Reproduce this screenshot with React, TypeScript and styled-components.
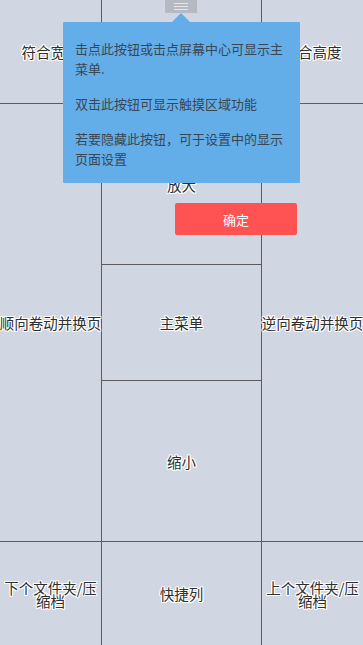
import React from 'react';
import styled, { createGlobalStyle } from 'styled-components';

const GlobalStyle = createGlobalStyle`
  html, body, #root {
    margin: 0;
    padding: 0;
    height: 100%;
  }
  body {
    font-family: "Noto Sans CJK SC", "Noto Sans", sans-serif;
    overflow: hidden;
  }
`

const Screen = styled.div`
  position: relative;
  width: 100%;
  height: 100%;
  display: grid;
  grid-template-columns: 101px 159px 1fr;
  grid-template-rows: 103px 160px 115px 160px 1fr;
  gap: 1px;
  background: #5c5c5e;
  overflow: hidden;
`

const Zone = styled.div<{ $col: number; $row: string }>`
  grid-column: ${p => p.$col};
  grid-row: ${p => p.$row};
  background: #d0d6e2;
  display: flex;
  align-items: center;
  justify-content: center;
  text-align: center;
  overflow: visible;
  min-width: 0;
`

const Label = styled.span<{ $nowrap?: boolean }>`
  font-size: 14.5px;
  line-height: 13px;
  color: #2e2e2e;
  white-space: ${p => (p.$nowrap ? 'nowrap' : 'normal')};
  line-break: anywhere;
  word-break: break-all;
  text-shadow: 1px 0 #fff, -1px 0 #fff, 0 1px #fff, 0 -1px #fff,
    1px 1px #fff, -1px -1px #fff, 1px -1px #fff, -1px 1px #fff;
  padding: 0;
`

const Handle = styled.div`
  position: absolute;
  top: 0;
  left: 165px;
  width: 32px;
  height: 13px;
  background: #b5b9c1;
  display: flex;
  flex-direction: column;
  align-items: center;
  justify-content: center;
  gap: 2px;
`

const HandleLine = styled.span`
  display: block;
  width: 14px;
  height: 1px;
  background: #e4e6ea;
`

const Tip = styled.div`
  position: absolute;
  top: 22px;
  left: 63px;
  width: 237px;
  height: 161px;
  box-sizing: border-box;
  padding: 17px 12px 0 12px;
  background: #63aee8;
  border-radius: 1px;
  &::before {
    content: '';
    position: absolute;
    top: -9px;
    left: 109px;
    border-left: 9px solid transparent;
    border-right: 9px solid transparent;
    border-bottom: 9px solid #63aee8;
  }
`

const TipText = styled.p`
  margin: 0 0 15px 0;
  font-size: 13px;
  line-height: 20px;
  color: #3b4654;
`

const Confirm = styled.button`
  position: absolute;
  top: 203px;
  left: 175px;
  width: 122px;
  height: 32px;
  border: none;
  border-radius: 2px;
  background: #ff5353;
  color: #fff;
  font-family: "Noto Sans CJK SC", sans-serif;
  font-size: 13px;
  padding: 0;
`

export default function App() {
  return (
    <>
      <GlobalStyle />
      <Screen>
        <Zone $col={1} $row="1"><Label $nowrap>符合宽度</Label></Zone>
        <Zone $col={2} $row="1" />
        <Zone $col={3} $row="1"><Label $nowrap>符合高度</Label></Zone>
        <Zone $col={1} $row="2 / 5"><Label $nowrap>顺向卷动并换页</Label></Zone>
        <Zone $col={2} $row="2"><Label>放大</Label></Zone>
        <Zone $col={3} $row="2 / 5"><Label $nowrap>逆向卷动并换页</Label></Zone>
        <Zone $col={2} $row="3"><Label>主菜单</Label></Zone>
        <Zone $col={2} $row="4"><Label>缩小</Label></Zone>
        <Zone $col={1} $row="5"><Label>下个文件夹/压缩档</Label></Zone>
        <Zone $col={2} $row="5"><Label>快捷列</Label></Zone>
        <Zone $col={3} $row="5"><Label>上个文件夹/压缩档</Label></Zone>

        <Handle>
          <HandleLine />
          <HandleLine />
          <HandleLine />
        </Handle>
        <Tip>
          <TipText>击点此按钮或击点屏幕中心可显示主菜单.</TipText>
          <TipText>双击此按钮可显示触摸区域功能</TipText>
          <TipText>若要隐藏此按钮，可于设置中的显示页面设置</TipText>
        </Tip>
        <Confirm>确定</Confirm>
      </Screen>
    </>
  );
}
